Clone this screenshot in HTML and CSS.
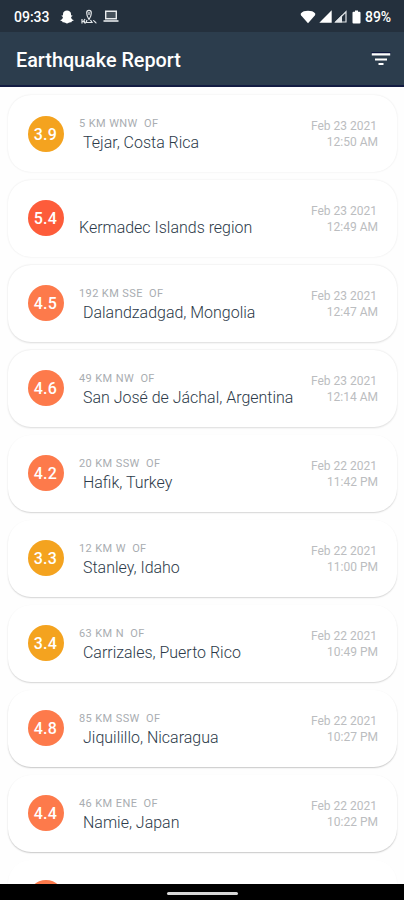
FILE: index.html
```
<!DOCTYPE html>
<html lang="en">
<head>
<meta charset="utf-8">
<title>Earthquake Report</title>
<link rel="stylesheet" href="styles.css">
</head>
<body>
<div class="status">
  <span class="clock">09:33</span>
  <svg class="ghost" width="14" height="14" viewBox="0 0 14 14"><path fill="#fff" d="M7 .5C4.800.5 3 2 3 4v1.500L1.800 5.300l-.2.800 1.300.800C3 8.500 1.800 9.500.3 10.100c0 .8 1.200.9 1.900 1.100l.4 1c1.200-.2 2 .1 2.700.6.500.4 1.100.7 1.700.7s1.200-.3 1.700-.7c.7-.5 1.500-.8 2.700-.6l.4-1c.7-.2 1.900-.3 1.900-1.100-1.500-.6-2.700-1.600-2.600-3.200l1.300-.8-.2-.8-1.200.2V4C11 2 9.200.5 7 .5z"/></svg>
  <svg class="pin" width="16" height="16" viewBox="0 0 16 16" fill="none" stroke="#e4e7ea" stroke-width="1.200"><path d="M8 10.500C6.300 8 5.700 6 5.700 4a2.300 2.600 0 0 1 4.600 0c0 2-.6 4-2.300 6.500zM8 3v3M1 10v4.500M1 12.500h3M4 10l-1.500 2.500L4.500 14.500M6 11l-1 2.500h6L9.500 11M12 11.500c2 0 2 2.500 3.500 2.500"/></svg>
  <svg class="laptop" width="16" height="13" viewBox="0 0 16 13"><path d="M2.700 1.200h10.600v7.600H2.700z" fill="#46515b" stroke="#e9ebed" stroke-width="1.400"/><path d="M.5 10h15v2H.5z" fill="#bfc4c9"/></svg>
  <span class="grow"></span>
  <svg class="wifi" width="16" height="14" viewBox="0 0 16 14"><path fill="#fff" d="M.8 3.500C2.300 1.500 5 .8 8 .8s5.700.7 7.200 2.700q.3 1-.4 1.900L8 13.200 1.200 5.400Q.5 4.500.8 3.500z"/></svg>
  <svg class="sig" width="13" height="13" viewBox="0 0 13 13"><path fill="#fff" d="M12.700.3v12.500H.3z"/></svg>
  <svg class="sig2" width="13" height="13" viewBox="0 0 13 13"><path fill="none" stroke="#dfe3e6" stroke-width="1.200" d="M12 1.800V12H1.800z"/><path fill="#e4e7ea" d="M8 5v7.500H.5z"/></svg>
  <svg class="batt" width="9" height="14" viewBox="0 0 9 14"><path fill="#fff" d="M3 .4h3v1.400h1.500q1 0 1 1v9.800q0 1-1 1h-6q-1 0-1-1V2.800q0-1 1-1H3z"/></svg>
  <span class="pct">89%</span>
</div>
<header class="bar">
  <h1>Earthquake Report</h1>
  <svg width="20" height="14" viewBox="0 0 20 14"><path fill="#0f1740" d="M.5 0h19v1.500H.5z"/><path fill="#fff" d="M.8 1.200h18.400v2.200H.8zM4 6.400h12v2H4zM7.500 11h5v2h-5z"/></svg>
</header>
<main class="list">
  <article class="card s1"><b class="mag amber">3.9</b><div class="place"><small>5 KM WNW&nbsp; OF</small><p class="in">Tejar, Costa Rica</p></div><div class="when"><div>Feb 23 2021</div><div class="time">12:50 AM</div></div></article>
  <article class="card s1"><b class="mag red">5.4</b><div class="place"><small>&nbsp;</small><p>Kermadec Islands region</p></div><div class="when"><div>Feb 23 2021</div><div class="time">12:49 AM</div></div></article>
  <article class="card s2"><b class="mag">4.5</b><div class="place"><small>192 KM SSE&nbsp; OF</small><p class="in">Dalandzadgad, Mongolia</p></div><div class="when"><div>Feb 23 2021</div><div class="time">12:47 AM</div></div></article>
  <article class="card s2"><b class="mag">4.6</b><div class="place"><small>49 KM NW&nbsp; OF</small><p class="in">San José de Jáchal, Argentina</p></div><div class="when"><div>Feb 23 2021</div><div class="time">12:14 AM</div></div></article>
  <article class="card s3"><b class="mag">4.2</b><div class="place"><small>20 KM SSW&nbsp; OF</small><p class="in">Hafik, Turkey</p></div><div class="when"><div>Feb 22 2021</div><div class="time">11:42 PM</div></div></article>
  <article class="card s3"><b class="mag amber">3.3</b><div class="place"><small>12 KM W&nbsp; OF</small><p class="in">Stanley, Idaho</p></div><div class="when"><div>Feb 22 2021</div><div class="time">11:00 PM</div></div></article>
  <article class="card s3"><b class="mag amber">3.4</b><div class="place"><small>63 KM N&nbsp; OF</small><p class="in">Carrizales, Puerto Rico</p></div><div class="when"><div>Feb 22 2021</div><div class="time">10:49 PM</div></div></article>
  <article class="card s4"><b class="mag">4.8</b><div class="place"><small>85 KM SSW&nbsp; OF</small><p class="in">Jiquilillo, Nicaragua</p></div><div class="when"><div>Feb 22 2021</div><div class="time">10:27 PM</div></div></article>
  <article class="card s4"><b class="mag">4.4</b><div class="place"><small>46 KM ENE&nbsp; OF</small><p class="in">Namie, Japan</p></div><div class="when"><div>Feb 22 2021</div><div class="time">10:22 PM</div></div></article>
  <article class="card last"><b class="mag"></b><div class="place"><small>63 KM SW&nbsp; OF</small></div></article>
</main>
<footer class="nav"><i></i></footer>
</body>
</html>
```
FILE: styles.css
```
* { box-sizing: border-box; margin: 0; }
body {
  width: 404px; height: 900px; overflow: hidden;
  display: flex; flex-direction: column;
  background: #fefefe; font-family: Roboto, sans-serif;
}
.status {
  flex: none; height: 32px; padding: 1px 13px 0 14px;
  display: flex; align-items: center;
  background: #24303d; color: #fff;
  font-size: 14px; font-weight: 500;
}
.clock { margin-right: 10px; }
.ghost { margin-right: 7px; }
.pin { margin-right: 6px; }
.grow { flex: 1; }
.wifi { margin-right: 3px; }
.sig { margin-right: 2px; }
.sig2 { margin-right: 5px; }
.batt { margin-right: 4px; }
.pct { font-size: 14px; letter-spacing: -.1px; }
.bar {
  flex: none; height: 55px; padding: 2px 13px 0 16px;
  display: flex; align-items: center; justify-content: space-between;
  background: #2c3d4d; border-bottom: 2px solid #131c42; color: #fff;
}
.bar svg { margin-bottom: 2px; }
h1 { padding-top: 2px; font-size: 19.800px; font-weight: 500; line-height: 24px; }
.list {
  flex: 1; min-height: 0; overflow: hidden;
  padding: 8px 7px 0 8px;
  display: flex; flex-direction: column; gap: 8px;
}
.card {
  flex: none; height: 76.960px; padding: 0 20px 0 19.500px;
  display: flex; align-items: flex-start;
  border-radius: 23px; background: #fff;
}
.s1 { box-shadow: 0 0 2px rgba(0,0,0,.1); }
.s2 { box-shadow: 0 .5px 2px rgba(0,0,0,.14); }
.s3 { box-shadow: 0 1px 1.500px rgba(0,0,0,.17); }
.s4 { box-shadow: 0 1px 1.500px rgba(0,0,0,.22); }
.last { box-shadow: 0 1px 1.500px rgba(0,0,0,.06); }
.mag {
  flex: none; width: 36px; height: 36px; margin: 20.500px 15.500px 0 0;
  border-radius: 50%; background: #fd7a4b; color: #fff;
  font-size: 16px; font-weight: 500; line-height: 37px; text-align: center;
  letter-spacing: .3px;
}
.amber { background: #f4a31f; }
.red { background: #fd5c3a; }
.place { flex: 1; padding-top: 21px; white-space: nowrap; }
small {
  display: block; margin-bottom: 1px;
  font-size: 11px; line-height: 16px; letter-spacing: .4px; color: #a9adb1;
}
p { font-size: 15.980px; line-height: 20px; font-weight: 300; color: #2c3a49; }
.in { padding-left: 4px; }
.when {
  padding-top: 23px; text-align: right; white-space: nowrap;
  font-size: 12px; line-height: 16px; color: #bbbdc0;
}
.time { margin-right: -1px; }
.nav {
  flex: none; height: 16px; padding-top: 2px; background: #000;
  display: flex; justify-content: center; align-items: center;
}
.nav i { width: 71px; height: 3px; border-radius: 2px; background: #d8d8d8; }
```
